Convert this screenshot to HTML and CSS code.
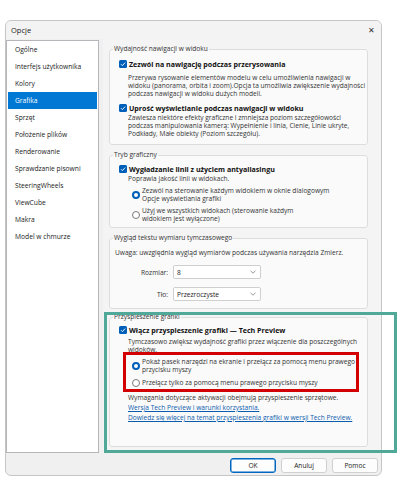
FILE: index.html
```html
<!DOCTYPE html>
<html lang="pl">
<head>
    <meta charset="UTF-8">
    <meta name="viewport" content="width=device-width, initial-scale=1.0">
    <title>Opcje</title>
    <link rel="stylesheet" href="styles.css">
</head>
<body>
    <div class="window">
        <div class="titlebar">
            <span class="title">Opcje</span>
            <span class="close">✕</span>
        </div>
        <div class="main">
            <ul class="nav">
                <li>Ogólne</li>
                <li>Interfejs użytkownika</li>
                <li>Kolory</li>
                <li class="active">Grafika</li>
                <li>Sprzęt</li>
                <li>Położenie plików</li>
                <li>Renderowanie</li>
                <li>Sprawdzanie pisowni</li>
                <li>SteeringWheels</li>
                <li>ViewCube</li>
                <li>Makra</li>
                <li>Model w chmurze</li>
            </ul>
            <div class="panel">
                <fieldset class="group group-nav">
                    <legend>Wydajność nawigacji w widoku</legend>
                    <div class="check-row">
                        <svg class="checkbox" viewBox="0 0 8 8"><rect width="8" height="8" rx="1.5" fill="#005fb8"/><path d="M2 4.2 L3.4 5.6 L6.1 2.6" stroke="#fff" stroke-width="0.9" fill="none"/></svg>
                        <span>Zezwól na nawigację podczas przerysowania</span>
                    </div>
                    <p class="desc desc-gap">Przerywa rysowanie elementów modelu w celu umożliwienia nawigacji w<br>widoku (panorama, orbita i zoom).Opcja ta umożliwia zwiększenie wydajności<br>podczas nawigacji w widoku dużych modeli.</p>
                    <div class="check-row check-gap">
                        <svg class="checkbox" viewBox="0 0 8 8"><rect width="8" height="8" rx="1.5" fill="#005fb8"/><path d="M2 4.2 L3.4 5.6 L6.1 2.6" stroke="#fff" stroke-width="0.9" fill="none"/></svg>
                        <span>Uprość wyświetlanie podczas nawigacji w widoku</span>
                    </div>
                    <p class="desc">Zawiesza niektóre efekty graficzne i zmniejsza poziom szczegółowości<br>podczas manipulowania kamerą: Wypełnienie i linia, Cienie, Linie ukryte,<br>Podkłady, Małe obiekty (Poziom szczegółu).</p>
                </fieldset>

                <fieldset class="group group-mode">
                    <legend>Tryb graficzny</legend>
                    <div class="check-row">
                        <svg class="checkbox" viewBox="0 0 8 8"><rect width="8" height="8" rx="1.5" fill="#005fb8"/><path d="M2 4.2 L3.4 5.6 L6.1 2.6" stroke="#fff" stroke-width="0.9" fill="none"/></svg>
                        <span>Wygładzanie linii z użyciem antyaliasingu</span>
                    </div>
                    <p class="desc">Poprawia jakość linii w widokach.</p>
                    <div class="radio-row">
                        <span class="radio on"></span>
                        <span>Zezwól na sterowanie każdym widokiem w oknie dialogowym<br>Opcje wyświetlania grafiki</span>
                    </div>
                    <div class="radio-row">
                        <span class="radio"></span>
                        <span>Użyj we wszystkich widokach (sterowanie każdym<br>widokiem jest wyłączone)</span>
                    </div>
                </fieldset>

                <fieldset class="group group-text">
                    <legend>Wygląd tekstu wymiaru tymczasowego</legend>
                    <p class="note">Uwaga: uwzględnia wygląd wymiarów podczas używania narzędzia Zmierz.</p>
                    <div class="field-row">
                        <span class="field-label">Rozmiar:</span>
                        <div class="select">
                            <span>8</span>
                            <svg class="chevron" viewBox="0 0 6 4"><path d="M0.5 0.8 L3 3.2 L5.5 0.8" stroke="#707070" stroke-width="0.7" fill="none"/></svg>
                        </div>
                    </div>
                    <div class="field-row">
                        <span class="field-label">Tło:</span>
                        <div class="select">
                            <span>Przezroczyste</span>
                            <svg class="chevron" viewBox="0 0 6 4"><path d="M0.5 0.8 L3 3.2 L5.5 0.8" stroke="#707070" stroke-width="0.7" fill="none"/></svg>
                        </div>
                    </div>
                </fieldset>

                <fieldset class="group group-accel">
                    <legend>Przyspieszenie grafiki</legend>
                    <div class="check-row">
                        <svg class="checkbox" viewBox="0 0 8 8"><rect width="8" height="8" rx="1.5" fill="#005fb8"/><path d="M2 4.2 L3.4 5.6 L6.1 2.6" stroke="#fff" stroke-width="0.9" fill="none"/></svg>
                        <span>Włącz przyspieszenie grafiki — Tech Preview</span>
                    </div>
                    <p class="desc desc-loose">Tymczasowo zwiększ wydajność grafiki przez włączenie dla poszczególnych<br>widoków.</p>
                    <div class="radio-row">
                        <span class="radio on"></span>
                        <span>Pokaż pasek narzędzi na ekranie i przełącz za pomocą menu prawego<br>przycisku myszy</span>
                    </div>
                    <div class="radio-row radio-gap">
                        <span class="radio"></span>
                        <span>Przełącz tylko za pomocą menu prawego przycisku myszy</span>
                    </div>
                    <p class="desc desc-req">Wymagania dotyczące aktywacji obejmują przyspieszenie sprzętowe.</p>
                    <a class="link" href="#">Wersja Tech Preview i warunki korzystania.</a>
                    <a class="link" href="#">Dowiedz się więcej na temat przyspieszenia grafiki w wersji Tech Preview.</a>
                </fieldset>
            </div>
        </div>
        <div class="footer">
            <button class="btn btn-default">OK</button>
            <button class="btn">Anuluj</button>
            <button class="btn">Pomoc</button>
        </div>
    </div>

    <!-- annotation frames drawn over the screenshot -->
    <div class="mark mark-green"></div>
    <div class="mark mark-red"></div>
</body>
</html>
```

FILE: styles.css
```css
html, body {
    margin: 0;
    padding: 0;
    width: 400px;
    height: 490px;
    background-color: #ffffff;
    font-family: "Open Sans", "Noto Sans", sans-serif;
    color: #1a1a1a;
}
body {
    position: relative;
    overflow: hidden;
}
.window {
    box-sizing: border-box;
    margin: 20px 0 0 5px;
    width: 377px;
    height: 456px;
    border: 1px solid #c6c6c6;
    border-radius: 6px;
    background-color: #f0f0f0;
    display: flex;
    flex-direction: column;
    overflow: hidden;
}
.titlebar {
    height: 18px;
    display: flex;
    align-items: center;
    justify-content: space-between;
    padding: 0 6px 1px 5px;
    box-sizing: border-box;
    background-color: #f3f3f3;
}
.title {
    font-size: 7.5px;
    color: #1a1a1a;
}
.close {
    font-size: 8px;
    color: #333;
}
.main {
    display: flex;
    height: 414px;
}
.nav {
    list-style-type: none;
    margin: 1px 0 0 0;
    padding: 0;
    width: 93px;
    height: 413px;
    box-sizing: border-box;
    border: 1px solid #b6b6ba;
    background-color: #ffffff;
    flex-shrink: 0;
}
.nav li {
    height: 17px;
    line-height: 17px;
    padding-left: 7px;
    margin: 0 1px;
    font-size: 6.7px;
    color: #1a1a1a;
    white-space: nowrap;
}
.nav li.active {
    background-color: #0078d4;
    color: #ffffff;
}
.panel {
    flex: 1;
    margin-left: 4px;
    padding: 5px 13px 0 6px;
    background-color: #f4f4f4;
    overflow: hidden;
}
.group {
    box-sizing: border-box;
    margin: 0;
    padding: 0 8px 0 5px;
    border: 1px solid #dddddd;
    border-radius: 3px;
    background-color: #fafafa;
    min-width: 0;
}
.group legend {
    font-size: 6.6px;
    line-height: 10px;
    padding: 0 1px;
    margin-left: -2px;
    color: #333;
}
.group-nav {
    height: 101px;
    padding-top: 5px;
}
.group-mode {
    height: 78px;
    margin-top: 5px;
    padding-top: 4px;
}
.group-text {
    height: 76px;
    margin-top: 5px;
    padding-top: 6px;
}
.group-accel {
    height: 135px;
    margin-top: 3px;
    padding-top: 3px;
}
.check-row {
    display: flex;
    align-items: center;
    gap: 2px;
    height: 10px;
    padding-left: 4px;
    font-size: 7.1px;
    font-weight: bold;
    color: #111;
    white-space: nowrap;
}
.check-gap {
    margin-top: 5px;
}
.checkbox {
    width: 8px;
    height: 8px;
    flex-shrink: 0;
}
.desc {
    margin: 1px 0 0 0;
    padding-left: 13px;
    font-size: 6.6px;
    line-height: 8px;
    color: #333;
    white-space: nowrap;
}
.desc-gap {
    margin-top: 5px;
}
.desc-loose {
    margin-top: 3px;
}
.radio-row {
    display: flex;
    align-items: center;
    gap: 2px;
    margin-top: 4px;
    padding-left: 17px;
    font-size: 6.6px;
    line-height: 8px;
    color: #333;
    white-space: nowrap;
}
.radio-gap {
    margin-top: 5px;
}
.radio {
    box-sizing: border-box;
    width: 8px;
    height: 8px;
    border-radius: 50%;
    border: 1px solid #7a7a7a;
    background-color: #fff;
    flex-shrink: 0;
}
.radio.on {
    border: 2.5px solid #005fb8;
}
.note {
    margin: 0;
    font-size: 6.6px;
    line-height: 8px;
    color: #333;
    white-space: nowrap;
}
.field-row {
    display: flex;
    align-items: center;
    gap: 5px;
    margin-top: 8px;
    font-size: 6.6px;
    color: #333;
}
.field-label {
    width: 53px;
    text-align: right;
}
.select {
    box-sizing: border-box;
    width: 88px;
    height: 14px;
    display: flex;
    align-items: center;
    justify-content: space-between;
    padding: 0 4px 0 3px;
    border: 1px solid #cfcfcf;
    border-radius: 2px;
    background-color: #ffffff;
    color: #1a1a1a;
}
.chevron {
    width: 6px;
    height: 4px;
}
.desc-req {
    margin-top: 7px;
}
.link {
    display: block;
    margin-top: 2px;
    padding-left: 13px;
    font-size: 6.6px;
    line-height: 8px;
    color: #0b5cad;
    white-space: nowrap;
}
.footer {
    display: flex;
    justify-content: flex-end;
    gap: 5px;
    padding: 5px 3px 0 0;
}
.btn {
    box-sizing: border-box;
    width: 46px;
    height: 15px;
    padding: 0;
    font-family: inherit;
    font-size: 6.6px;
    color: #1a1a1a;
    background-color: #fdfdfd;
    border: 1px solid #d0d0d0;
    border-radius: 3px;
}
.btn-default {
    border: 1px solid #0067c0;
    box-shadow: inset 0 0 0 0.5px #0067c0;
}
.mark {
    position: absolute;
    box-sizing: border-box;
}
.mark-green {
    left: 104px;
    top: 312px;
    width: 293px;
    height: 141px;
    border: 3px solid #4fa898;
}
.mark-red {
    left: 123px;
    top: 352px;
    width: 236px;
    height: 40px;
    border: 3px solid #d20000;
}
```
